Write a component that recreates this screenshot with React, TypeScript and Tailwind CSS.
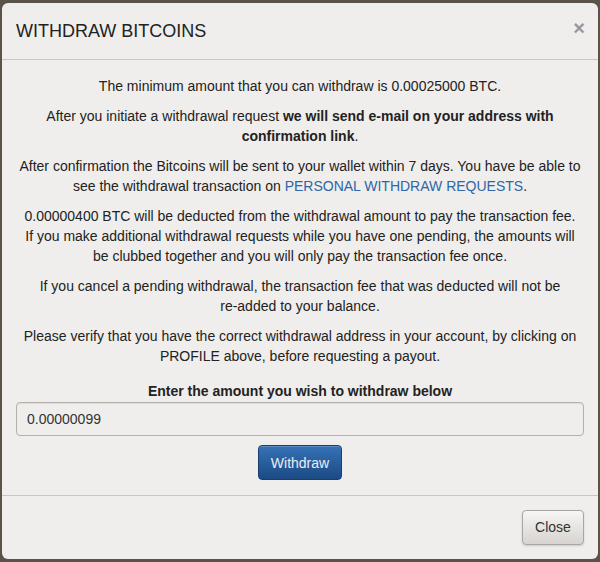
export default function App() {
  return (
    <div className="w-[600px] h-[562px] bg-[#5b524a] pt-[3px] px-[2px] pb-[3px]" style={{ fontFamily: '"Liberation Sans", Arial, sans-serif' }}>
      <div className="h-full rounded-[6px] bg-[#efeeec] flex flex-col text-[#222]">
        {/* header */}
        <div className="h-[57px] flex items-center justify-between pl-[14px] pr-[13px] border-b border-[#c9c6c2]">
          <h3 className="text-[18px] leading-none text-[#222] -mt-[1px]">WITHDRAW BITCOINS</h3>
          <span className="text-[20px] font-bold text-[#9a9896] leading-none -mt-[7px]">×</span>
        </div>

        {/* body */}
        <div className="flex-1 px-[16px] pt-[16px] text-[14px] leading-[20px] text-center">
          <p className="mb-[10px]">The minimum amount that you can withdraw is 0.00025000 BTC.</p>
          <p className="mb-[10px]">
            After you initiate a withdrawal request <b>we will send e-mail on your address with confirmation link</b>.
          </p>
          <p className="mb-[10px]">
            After confirmation the Bitcoins will be sent to your wallet within 7 days. You have be able to see the withdrawal transaction on{' '}
            <a className="text-[#2e66a6]">PERSONAL WITHDRAW REQUESTS</a>.
          </p>
          <p className="mb-[10px]">
            0.00000400 BTC will be deducted from the withdrawal amount to pay the transaction fee.
            <br />
            If you make additional withdrawal requests while you have one pending, the amounts will be clubbed together and you will only pay the transaction fee once.
          </p>
          <p className="mb-[10px] px-[17px]">
            If you cancel a pending withdrawal, the transaction fee that was deducted will not be re-added to your balance.
          </p>
          <p className="mb-[10px]">
            Please verify that you have the correct withdrawal address in your account, by clicking on PROFILE above, before requesting a payout.
          </p>
          <div className="pt-[5px] -mx-[2px]">
            <label className="block font-bold mb-[1px]">Enter the amount you wish to withdraw below</label>
            <input
              defaultValue="0.00000099"
              className="block w-full h-[34px] px-[10px] border border-[#b5b2ae] rounded-[4px] bg-[#efeeec] text-[14px] text-[#333] text-left shadow-[inset_0_1px_1px_rgba(0,0,0,0.08)] outline-none"
            />
            <button className="mt-[9px] h-[35px] w-[84px] rounded-[4px] border border-[#173f70] bg-gradient-to-b from-[#3573b6] to-[#1c4a84] text-[#e8eef6] text-[14px] shadow-[inset_0_1px_0_rgba(255,255,255,0.2)]">
              Withdraw
            </button>
          </div>
        </div>

        {/* footer */}
        <div className="h-[64px] border-t border-[#c9c6c2] flex items-center justify-end pr-[14px]">
          <button className="h-[35px] w-[62px] rounded-[4px] border border-[#a9a6a2] bg-gradient-to-b from-[#f7f6f5] to-[#d6d3d0] text-[#333] text-[14px] shadow-[0_1px_2px_rgba(0,0,0,0.15)]">
            Close
          </button>
        </div>
      </div>
    </div>
  )
}
